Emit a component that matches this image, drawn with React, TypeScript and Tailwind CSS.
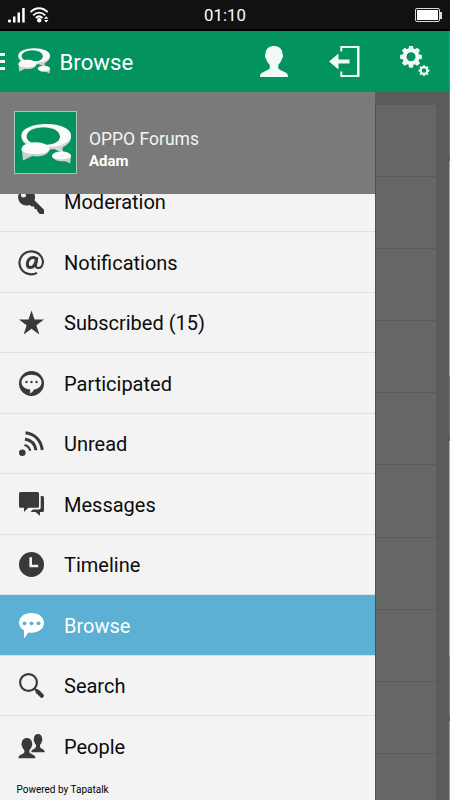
import React from 'react';

interface MenuItem {
  id: string;
  label: string;
  icon: React.ReactNode;
}

const BubbleLogo: React.FC<{ className?: string }> = ({ className }) => (
  <svg viewBox="0 0 50 40" className={className}>
    <path
      fillRule="evenodd"
      fill="#d4d4d4"
      d="M25 2C11.500 2 .5 6 .5 13S11 25.500 25 25.500c3 0 5.500-.2 8-.6L42 29l-.5-5.500C46.500 21 50 17.500 50 13 50 6 38.500 2 25 2zM22.500 3.500c10 0 16.500 3.800 16.500 9.500s-6.500 8-16.500 8S5.500 18 5.500 12.500s7-9 17-9z"
    />
    <path
      fillRule="evenodd"
      fill="#fbfbfb"
      d="M25.500 0C12 0 .5 4.500 .5 11.500S12 23 25.500 23 50 18.500 50 11.500 39 0 25.500 0zM22.500 2.800c10 0 16.500 4.200 16.500 9.700s-6.500 8.500-16.500 8.500S5.500 18 5.500 12.500s7-9.700 17-9.700z"
    />
    <path fill="#cfcfcf" d="M.8 25h27.700c0 4.500-6 7.500-13 7.500-1.500 0-3-.1-4.500-.4L2 36.500z" />
    <path fill="#fbfbfb" d="M14.500 18.200c8 0 14 3 14 7 0 3-6 4.800-14 4.800S.5 28.200.5 25.200c0-4 6-7 14-7z" />
    <path fill="#cfcfcf" d="M31 31.500h19l-.8 8-4.700-2.300c-7 .8-13-1.400-13.500-5.700z" />
    <path fill="#fbfbfb" d="M40.500 27.500c5.500 0 9.500 2 9.500 4.500s-4 3.200-9.500 3.200S31 34.500 31 32s4-4.500 9.500-4.500z" />
  </svg>
);

const PERSON =
  'M14 0C9.500 0 6 2.500 5.600 7c-.2 1.200-.8 2-.6 3.500.1 1.300.8 1.600 1.100 2.400.8 2.700 2 4 3.400 5.500.8 2.500.2 4.300-1 5.200L2.500 26.500C.8 27.300 0 28.500 0 31h28c0-2.500-.8-3.700-2.500-4.500l-6-2.900c-1.200-.9-1.800-2.700-1-5.200 1.400-1.500 2.600-2.800 3.400-5.500.3-.8 1-1.100 1.100-2.400.2-1.500-.4-2.300-.6-3.500C22 2.500 18.500 0 14 0z';

const PersonIcon = () => (
  <svg viewBox="0 0 28 31" className="h-[31px] w-7" fill="#f2faf7">
    <path d={PERSON} />
  </svg>
);

const LogoutIcon = () => (
  <svg viewBox="0 0 31 31" className="size-[31px]" fill="#f2faf7">
    <path d="M11.300 0H30.500v31H11.300v-5.500h2v3.500H28V2H13.300v3.500h-2z" />
    <path d="M0 15.500 9.500 7.500V13.500H20.500v4H9.500v6z" />
  </svg>
);

const Gear: React.FC<{ cx: number; cy: number; scale: number }> = ({ cx, cy, scale }) => (
  <g transform={`translate(${cx} ${cy}) scale(${scale})`}>
    <circle r="6.500" fill="none" stroke="#f2faf7" strokeWidth="4" />
    {[0, 45, 90, 135, 180, 225, 270, 315].map((angle) => (
      <path key={angle} d="M-2.600-7.800-1.900-10.900h3.800l.7 3.100z" fill="#f2faf7" transform={`rotate(${angle})`} />
    ))}
  </g>
);

const GearsIcon = () => (
  <svg viewBox="0 0 30 32" className="h-8 w-[30px]">
    <Gear cx={11} cy={11.800} scale={1} />
    <Gear cx={24} cy={25.600} scale={0.5} />
  </svg>
);

const menuItems: MenuItem[] = [
  {
    id: 'moderation',
    label: 'Moderation',
    icon: (
      <path
        fillRule="evenodd"
        d="M8 0a8.300 8.300 0 1 0 2.500 16l2.300 1.600 2.200-.2.600 2.500 2.200.3.500 2 2.500 2.800h4.200v-4.200L15.500 11.300A8.300 8.300 0 0 0 8 0zM4.500 3.500a2.500 2.500 0 1 1 0 5 2.500 2.500 0 0 1 0-5z"
      />
    ),
  },
  {
    id: 'notifications',
    label: 'Notifications',
    icon: (
      <g fill="none" stroke="#393939">
        <path strokeWidth="2.200" d="M18 22.900A11.800 11.500 0 1 1 24 11.300c0 4.200-2.200 6.700-4.700 6.700-2 0-2.700-1.300-2.300-3.200l1.400-7.500" />
        <path strokeWidth="3" d="M17.300 9.500C16.800 8 15.800 7.600 14.300 7.600c-3.500 0-6 3-6 6.400 0 2.400 1.200 3.600 3 3.600 3 0 5.100-2.600 6-8.100z" />
      </g>
    ),
  },
  {
    id: 'subscribed',
    label: 'Subscribed (15)',
    icon: <path d="M12.500.5l3 9h9.500l-7.600 5.700 2.900 9.300-7.800-5.700-7.800 5.700 2.900-9.300L0 9.500h9.500z" />,
  },
  {
    id: 'participated',
    label: 'Participated',
    icon: (
      <>
        <circle cx="12.500" cy="12.500" r="12.500" />
        <path fill="#f3f3f3" d="M12.500 3.700c5.700 0 10 3.200 10 7.500 0 4-3.200 6.700-7.500 7.300-.7 1.900-2.300 3.300-4.500 4 .7-1.200.9-2.400.7-3.900-4.900-.5-8.700-3.300-8.700-7.400 0-4.300 4.300-7.500 10-7.500z" />
        <circle cx="7.500" cy="11" r="1.200" />
        <circle cx="12.500" cy="11" r="1.200" />
        <circle cx="17.500" cy="11" r="1.200" />
      </>
    ),
  },
  {
    id: 'unread',
    label: 'Unread',
    icon: (
      <>
        <circle cx="3.300" cy="21.700" r="3.300" />
        <g fill="none" stroke="#393939">
          <path strokeWidth="3" d="M6.500 1.700C16 3 22 9.500 23.300 19" />
          <path strokeWidth="3" d="M6 8c6 1 10 5 11 11.300" />
          <path strokeWidth="2.200" d="M5.500 14c3.200.7 5 2.700 5.700 5.800" />
        </g>
      </>
    ),
  },
  {
    id: 'messages',
    label: 'Messages',
    icon: (
      <>
        <path d="M1.500 0h17q1.500 0 1.500 1.500v12.800q0 1.500-1.500 1.500H9.300L5 20v-4.200H1.500Q0 15.800 0 14.300V1.500Q0 0 1.500 0z" />
        <path d="M21.700 4h1.800q1.500 0 1.500 1.500v13q0 1.500-1.500 1.500H21v3.700L16.500 20H11.500l2.500-2.400h5.700q2 0 2-2z" />
      </>
    ),
  },
  {
    id: 'timeline',
    label: 'Timeline',
    icon: (
      <>
        <circle cx="12.500" cy="12.500" r="12.500" />
        <path d="M11.700 5.300v8.700h7.500" fill="none" stroke="#f3f3f3" strokeWidth="2.600" />
      </>
    ),
  },
  {
    id: 'browse',
    label: 'Browse',
    icon: (
      <>
        <path fill="#fff" d="M12.500 0C19.800 0 25 4.200 25 9.800c0 5.700-5.200 9.900-12.500 9.900-1 0-2-.1-3-.3L5 25.500v-8C2 15.800 0 13.100 0 9.800 0 4.200 5.200 0 12.500 0z" />
        <g fill="#5bb0d3">
          <circle cx="5.500" cy="10.300" r="1.900" />
          <circle cx="12.500" cy="10.300" r="1.900" />
          <circle cx="19.500" cy="10.300" r="1.900" />
        </g>
      </>
    ),
  },
  {
    id: 'search',
    label: 'Search',
    icon: (
      <g fill="none" stroke="#393939">
        <circle cx="9.500" cy="9.500" r="8.400" strokeWidth="2.200" />
        <path d="m15.500 15.500 2.500 2.500" strokeWidth="2" />
        <path d="m18.500 18.500 4.300 4.300" strokeWidth="4.200" strokeLinecap="round" />
      </g>
    ),
  },
  {
    id: 'people',
    label: 'People',
    icon: (
      <>
        <path d={PERSON} transform="translate(12.300 0) scale(.48 .59)" />
        <path d={PERSON} transform="translate(-.5 4) scale(.6 .65)" stroke="#f3f3f3" strokeWidth="1.500" paintOrder="stroke" />
      </>
    ),
  },
];

const StatusBar = () => (
  <div className="flex h-[31px] shrink-0 items-center justify-between border-b-2 border-black bg-[#111111] px-2">
    <div className="flex w-20 items-center gap-[5px] pt-px">
      <svg viewBox="0 0 17 15" className="h-[15px] w-[17px]" fill="#fff">
        <rect x="0" y="11.500" width="3" height="3" rx="1" />
        <rect x="5" y="8.500" width="2.500" height="6" />
        <rect x="9.500" y="4.500" width="2.500" height="10" />
        <rect x="14.200" y="0" width="2.500" height="14.500" />
      </svg>
      <svg viewBox="0 0 19 16" className="h-4 w-[19px]" fill="none" stroke="#fff">
        <path strokeWidth="1.800" d="M.6 5.200C5.500-.1 12.500-.1 17.700 5.200M3.200 8.300c3.500-3.600 8.300-3.600 12 0M5.800 11c2-2 4.700-2 6.700 0" />
        <circle cx="9.200" cy="13.300" r="2.200" fill="#fff" stroke="none" />
        <path fill="#fff" stroke="none" d="m14 11.700 2.200-2.500 2.200 2.500zM14 13l2.200 2.500 2.200-2.500z" />
      </svg>
    </div>
    <span className="pt-[2px] pl-px text-[16.800px] leading-none text-white">01:10</span>
    <div className="flex w-20 items-center justify-end pt-px">
      <div className="h-[14px] w-[25px] rounded-[2px] border border-[#dddddd] p-px">
        <div className="h-full bg-white" />
      </div>
      <div className="-mr-px h-[7px] w-[2px] bg-[#dddddd]" />
    </div>
  </div>
);

const Toolbar = () => (
  <header className="flex h-[60.500px] shrink-0 items-center bg-[#02935f]">
    <div className="flex w-[5px] flex-col gap-1">
      <span className="h-[3px] bg-white" />
      <span className="h-[3px] bg-white" />
      <span className="h-[3px] bg-white" />
    </div>
    <BubbleLogo className="ml-[13px] h-[26px] w-8" />
    <h1 className="ml-[9.500px] pt-px text-[22.200px] leading-none text-white">Browse</h1>
    <div className="ml-auto flex items-center">
      <PersonIcon />
      <div className="ml-[41px]">
        <LogoutIcon />
      </div>
      <div className="mr-[19px] ml-[40px]">
        <GearsIcon />
      </div>
    </div>
  </header>
);

const Drawer = () => {
  const selected = 'browse';

  return (
    <aside className="flex w-[374.600px] shrink-0 flex-col bg-[#f3f3f3]">
      {/* Account header */}
      <div className="z-10 flex h-[102.500px] shrink-0 items-center bg-[#7a7a7a] pl-[14px]">
        <div className="flex h-[63px] w-[63px] items-center justify-center border border-[#a9c4b8] bg-[#02935f] pt-[2px]">
          <BubbleLogo className="h-10 w-[50px]" />
        </div>
        <div className="ml-3 pt-[14px] text-white">
          <p className="text-[17.500px] leading-[22px] text-[#f4f4f4]">OPPO Forums</p>
          <p className="text-[15px] leading-[22px] font-bold">Adam</p>
        </div>
      </div>

      {/* Menu, scrolled a little under the header */}
      <div className="min-h-0 flex-1 overflow-hidden">
        <ul className="-mt-[22.300px]">
          {menuItems.map((item) => (
            <li
              key={item.id}
              className={`flex h-[60.500px] items-center border-b pl-[18.500px] ${
                item.id === selected
                  ? 'border-[#d5dfe3] bg-[#5bb0d3] text-white'
                  : 'border-[#e0e0e0] text-[#0c0c0c] last:border-transparent'
              }`}
            >
              <svg viewBox="0 0 25 25" className="mt-px size-[25px] overflow-visible" fill="#393939">
                {item.icon}
              </svg>
              <span className="ml-[20.500px] pt-[2px] text-[20px] leading-none">{item.label}</span>
            </li>
          ))}
        </ul>
        <p className="mt-[8.500px] ml-[16.500px] text-[10px] leading-none text-black">Powered by Tapatalk</p>
      </div>
    </aside>
  );
};

const Backdrop = () => (
  <main className="flex flex-1 overflow-hidden bg-[#5c5c5c] pt-[13px]">
    <div className="w-[61px] border-l border-[#505050] bg-[#666666]">
      {Array.from({ length: 10 }, (_, i) => (
        <div key={i} className="h-[72.200px] border-b border-[#5a5a5a]" />
      ))}
    </div>
  </main>
);

// Sliver of the tiles on the next page
const NextPage = () => (
  <div className="flex w-px shrink-0 flex-col bg-[#5c5c5c]">
    <div className="h-[31px] bg-[#111111]" />
    <div className="h-[125px] bg-[#3c8f9c]" />
    <div className="mt-[5px] h-[215px] bg-[#86b5a6]" />
    <div className="h-[60px] bg-[#4a7fae]" />
    <div className="mt-[5px] h-[215px] bg-[#9cb59c]" />
    <div className="h-[60px] bg-[#4a9a7c]" />
    <div className="mt-[5px] flex-1 bg-[#6ba9b0]" />
  </div>
);

export default function App() {
  return (
    <div className="flex h-[800px] w-[450px] overflow-hidden bg-[#111111] font-['Roboto',sans-serif]">
      <div className="flex w-[449px] shrink-0 flex-col">
        <StatusBar />
        <Toolbar />
        <div className="flex min-h-0 flex-1">
          <Drawer />
          <Backdrop />
        </div>
      </div>
      <NextPage />
    </div>
  );
}
